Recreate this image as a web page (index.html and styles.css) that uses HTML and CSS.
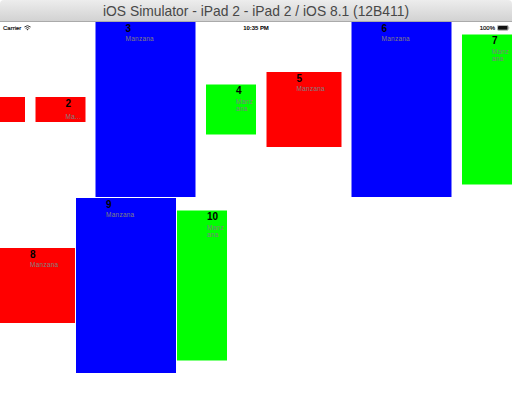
FILE: index.html
```html
<!DOCTYPE html>
<html lang="en">
<head>
<meta charset="utf-8">
<title>iOS Simulator</title>
<link rel="stylesheet" href="styles.css">
</head>
<body>
<header class="titlebar"><svg class="title" width="320" height="21"><text x="0" y="16" textLength="306" lengthAdjust="spacingAndGlyphs">iOS Simulator - iPad 2 - iPad 2 / iOS 8.1 (12B411)</text></svg></header>
<main class="screen">
  <div class="statusbar">
    <div class="carrier"><span>Carrier</span>
      <svg width="7" height="6" viewBox="0 0 7 6" fill="none" stroke="#222"><path d="M.4 2Q3.5-.7 6.6 2M1.6 3.4Q3.5 1.8 5.4 3.4" stroke-width=".9"/><path d="M2.5 4.3Q3.5 3.6 4.5 4.3L3.5 5.4Z" fill="#222" stroke="none"/></svg>
    </div>
    <div class="clock">10:35 PM</div>
    <div class="power"><span>100%</span>
      <svg width="13" height="6" viewBox="0 0 13 6"><rect x=".4" y=".4" width="10.8" height="4.9" rx="1" fill="#fff" stroke="#777" stroke-width=".6"/><rect x="1" y="1" width="9.6" height="3.7" rx=".4" fill="#111"/><path d="M11.8 1.9Q13 2.8 11.8 3.8Z" fill="#444"/></svg>
    </div>
  </div>
  <section class="row row-top">
    <article class="cell red tiny"></article>
    <article class="cell red small edge-x"><b>2</b><p>Ma...</p></article>
    <article class="cell blue large edge-x"><b>3</b><p>Manzana</p></article>
    <article class="cell green square edge-y"><b>4</b><p>Manz<br>ana</p></article>
    <article class="cell red medium edge-x"><b>5</b><p>Manzana</p></article>
    <article class="cell blue large edge-x"><b>6</b><p>Manzana</p></article>
    <article class="cell green tall edge-y"><b>7</b><p>Manz<br>ana</p></article>
  </section>
  <section class="row row-bottom">
    <article class="cell red medium"><b>8</b><p>Manzana</p></article>
    <article class="cell blue large"><b>9</b><p>Manzana</p></article>
    <article class="cell green tall edge-y"><b>10</b><p>Manz<br>ana</p></article>
  </section>
</main>
</body>
</html>
```
FILE: styles.css
```css
* { box-sizing: border-box; }
body {
  margin: 0;
  width: 512px;
  height: 406px;
  overflow: hidden;
  background: #fff;
  font-family: "Liberation Sans", Arial, sans-serif;
}
.titlebar {
  height: 22px;
  padding-left: 103px;
  border-bottom: 1px solid #aaa;
  border-radius: 4px 4px 0 0;
  background: linear-gradient(#ededed, #d2d2d2);
}
.title { display: block; overflow: visible; font-size: 14.5px; fill: #484848; }
.screen { position: relative; }
.statusbar {
  position: absolute;
  inset: 0 0 auto;
  height: 12px;
  display: grid;
  grid-template-columns: 1fr auto 1fr;
  align-items: center;
  padding: 0 2px 0 3px;
  font-size: 6px;
  line-height: 12px;
  color: #000;
}
.carrier, .power { display: flex; align-items: center; gap: 3px; }
.carrier { -webkit-text-stroke: 0.15px; }
.power { justify-content: flex-end; gap: 2px; -webkit-text-stroke: 0.15px; }
.clock { margin-right: 1px; font-weight: bold; letter-spacing: -0.05px; }
.row {
  display: flex;
  align-items: center;
  height: 175px;
}
.row-top { gap: 10px; }
.row-bottom { gap: 1px; margin-top: 1px; }
.cell {
  flex: none;
  padding-left: 30px;
  overflow: hidden;
}
.red { background: #f00; --edge: #ff8080; }
.blue { background: #00f; --edge: #8080ff; }
.green { background: #0f0; --edge: #80ff80; }
.tiny { width: 25px; height: 25px; padding: 0; }
.small { width: 50px; height: 25px; }
.square { width: 50px; height: 50px; }
.medium { width: 75px; height: 75px; }
.large { width: 100px; height: 175px; }
.tall { width: 50px; height: 150px; }
.edge-x {
  border: solid var(--edge);
  border-width: 0 1px;
  padding-left: 29.5px;
}
.edge-y { border: solid var(--edge); border-width: 1px 0; }
.small.edge-x { width: 51px; }
.medium.edge-x { width: 76px; }
.large.edge-x { width: 101px; }
.square.edge-y { height: 51px; }
.tall.edge-y { height: 151px; }
/* Neighbouring half-pixel edges share one pixel of the gap. */
.small + .large, .medium + .large.edge-x { margin-left: -1px; }
.cell b {
  display: block;
  height: 12px;
  font-size: 10px;
  line-height: 13px;
  color: #000;
}
.edge-y b { line-height: 12px; }
.cell p {
  margin: 1px 0 0;
  font-size: 6.5px;
  line-height: 8px;
  letter-spacing: 0.25px;
  color: #808080;
}
.edge-y p { line-height: 7px; }
.small p { margin-top: 4px; }
```
